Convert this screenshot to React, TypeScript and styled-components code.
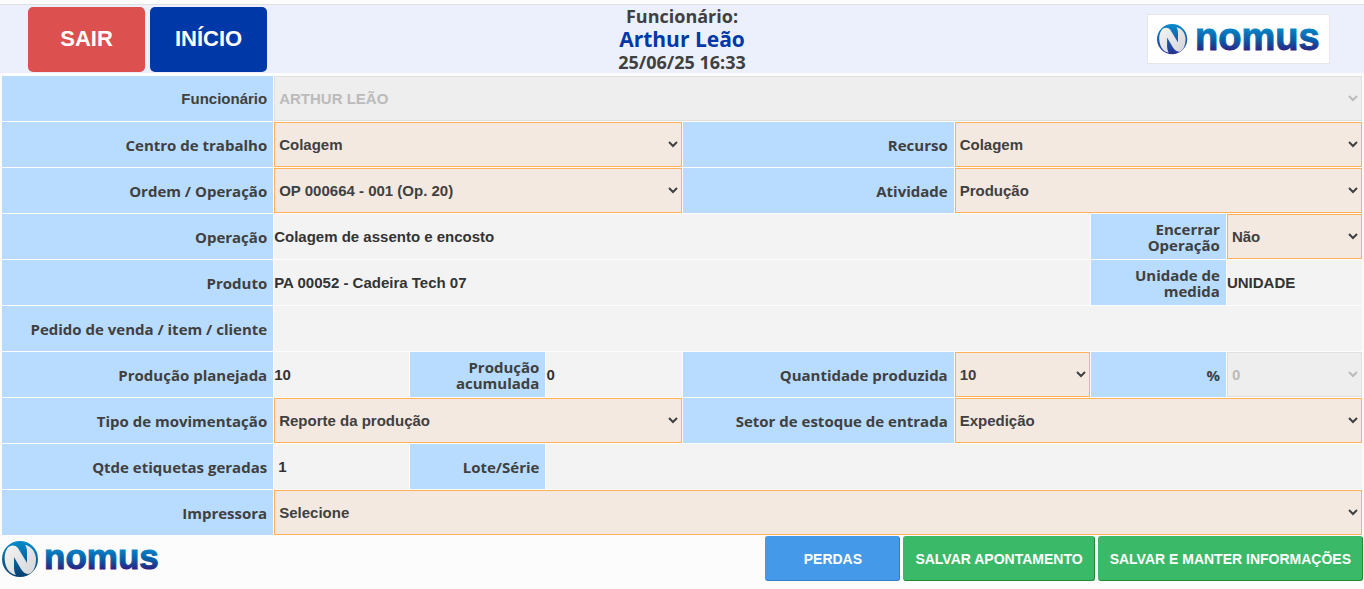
import React, { useId } from "react";
import styled, { createGlobalStyle } from "styled-components";

const sans = `"Liberation Sans", Arial, sans-serif`;
const openSans = `"Open Sans", "Noto Sans", sans-serif`;

const GlobalStyle = createGlobalStyle`
  *, *::before, *::after { box-sizing: border-box; }
  body {
    margin: 0;
    background: #fcfcfc;
    color: #404040;
    font: bold 15px/16px ${sans};
  }
`;

const Page = styled.div`
  padding-top: 4px;
`;

const Header = styled.header`
  display: grid;
  grid-template-columns: 1fr auto 1fr;
  align-items: center;
  min-height: 69px;
  padding: 0 28px;
  border-top: 1px solid #e0e0e0;
  background: #ebf0fc;
`;

const HeaderActions = styled.nav`
  display: flex;
  gap: 5px;
`;

const HeaderButton = styled.button<{ $color: string }>`
  width: 117px;
  height: 65px;
  padding: 0;
  border: 0;
  border-radius: 5px;
  background: ${(p) => p.$color};
  color: #fff;
  font: bold 22px/24px ${sans};
`;

const Session = styled.div`
  display: flex;
  flex-direction: column;
  align-items: center;
  font: bold 18px/22px ${openSans};
`;

const UserName = styled.strong`
  color: #0038a8;
  font-size: 21px;
  font-weight: bold;
  line-height: 24px;
`;

const LogoCard = styled.div`
  justify-self: end;
  display: flex;
  margin-right: 6px;
  padding: 8px;
  border: 1px solid #e6e6e6;
  background: #fff;
`;

const LogoSvg = styled.svg`
  display: block;
  overflow: visible;
`;

const Form = styled.form`
  padding-top: 3px;
`;

const Fields = styled.div`
  display: grid;
  grid-template-columns: repeat(10, minmax(0, 1fr));
  grid-auto-rows: minmax(45px, auto);
  gap: 1px;
  padding: 0 2px;
`;

const Label = styled.label<{ $span?: number; $plain?: boolean }>`
  grid-column: span ${(p) => p.$span ?? 2};
  display: flex;
  align-items: center;
  justify-content: flex-end;
  padding: 0 6px 0 24px;
  background: #b8dcff;
  font-family: ${(p) => (p.$plain ? sans : openSans)};
  text-align: right;
`;

const Value = styled.output<{ $span: number }>`
  grid-column: span ${(p) => p.$span};
  display: flex;
  align-items: center;
  background: #f3f3f3;
  color: #333;
`;

const TextInput = styled.input<{ $span: number }>`
  grid-column: span ${(p) => p.$span};
  width: 100%;
  min-width: 0;
  padding: 0 4px;
  border: 0;
  background: #f3f3f3;
  color: #333;
  font: inherit;
`;

const Select = styled.select<{ $span: number }>`
  grid-column: span ${(p) => p.$span};
  width: 100%;
  min-width: 0;
  height: 45px;
  padding: 0;
  border: 1px solid #ffb059;
  border-radius: 0;
  background: #f4e9e1;
  color: #404040;
  font: inherit;

  &:disabled {
    border-color: #e0e0e0;
    background: #eee;
    color: #bbb;
    opacity: 1;
  }
`;

const Footer = styled.footer`
  display: flex;
  align-items: center;
  justify-content: space-between;
  padding: 1px 1px 8px 2px;
`;

const FooterActions = styled.div`
  display: flex;
  gap: 3px;
`;

const FooterButton = styled.button<{ $primary?: boolean }>`
  min-width: 135px;
  height: 45px;
  padding: 0 11px;
  border: 1px solid;
  border-color: ${(p) =>
    p.$primary ? "#4499e8 #3280c4 #3280c4 #4499e8" : "#3aba68 #228b30 #228b30 #3aba68"};
  border-radius: 3px;
  background: ${(p) => (p.$primary ? "#4499e8" : "#3aba68")};
  color: #fff;
  font: bold 14px/16px ${sans};
`;

function Logo({ large = false }: { large?: boolean }) {
  const id = useId();
  const blue = `${id}-blue`;
  const silver = `${id}-silver`;
  return (
    <LogoSvg
      width={large ? 165 : 157}
      height={large ? 32 : 36}
      viewBox={large ? "0 0 165 32" : "0 0 157 36"}
      role="img"
      aria-label="nomus"
    >
      <defs>
        <linearGradient id={blue} x1="0" y1="0" x2="0" y2="1">
          <stop offset="0.3" stopColor="#0785c8" />
          <stop offset="0.6" stopColor="#0a58a4" />
          <stop offset="0.82" stopColor="#2b2385" />
        </linearGradient>
        <linearGradient id={`${blue}-disc`} x1="0" y1="0" x2="0" y2="1">
          <stop offset="0" stopColor="#078bcb" />
          <stop offset="1" stopColor={large ? "#28318f" : "#083f70"} />
        </linearGradient>
        <linearGradient id={silver} x1="0" y1="0" x2="1" y2="1">
          <stop offset="0" stopColor="#f4f4f4" />
          <stop offset="1" stopColor="#d4d5d8" />
        </linearGradient>
      </defs>
      <g transform={large ? "translate(1 1) scale(0.84)" : undefined}>
        <circle cx="18" cy="18" r="18" fill={`url(#${blue}-disc)`} />
        <path
          d="M5 8 C7 4 13 3 16 7 L25 22 V11 C25 7 24 5 23 4 C29 5 33 10 34 17 C34 25 32 31 27 33 C23 33 21 31 19 28 L12 16 V26 C12 30 13 33 14 34 C8 33 4 28 3 21 C2 16 3 11 5 8 Z"
          fill={`url(#${silver})`}
        />
      </g>
      <text
        x={large ? 39 : 42}
        y={large ? 27 : 28}
        fontFamily="Liberation Sans, Arial, sans-serif"
        fontWeight="700"
        fontSize={large ? 38 : 35}
        fill={`url(#${blue})`}
        stroke={`url(#${blue})`}
        strokeWidth="1"
      >
        nomus
      </text>
    </LogoSvg>
  );
}

type FieldProps = {
  id: string;
  label: string;
  value?: string;
  span: number;
  labelSpan?: number;
  plain?: boolean;
  disabled?: boolean;
};

function SelectField({ id, label, value, span, labelSpan, plain, disabled }: FieldProps) {
  return (
    <>
      <Label htmlFor={id} $span={labelSpan} $plain={plain}>{label}</Label>
      <Select id={id} $span={span} disabled={disabled} defaultValue={value}>
        <option>{value}</option>
      </Select>
    </>
  );
}

function ValueField({ id, label, value, span, labelSpan }: FieldProps) {
  return (
    <>
      <Label htmlFor={id} $span={labelSpan}>{label}</Label>
      <Value id={id} $span={span}>{value}</Value>
    </>
  );
}

function InputField({ id, label, value, span, labelSpan }: FieldProps) {
  return (
    <>
      <Label htmlFor={id} $span={labelSpan}>{label}</Label>
      <TextInput id={id} $span={span} defaultValue={value} />
    </>
  );
}

export default function App() {
  return (
    <Page>
      <GlobalStyle />
      <Header>
        <HeaderActions>
          <HeaderButton type="button" $color="#dc5050">SAIR</HeaderButton>
          <HeaderButton type="button" $color="#0038a8">INÍCIO</HeaderButton>
        </HeaderActions>
        <Session>
          <span>Funcionário:</span>
          <UserName>Arthur Leão</UserName>
          <time dateTime="2025-06-25T16:33">25/06/25 16:33</time>
        </Session>
        <LogoCard>
          <Logo large />
        </LogoCard>
      </Header>
      <Form onSubmit={(event) => event.preventDefault()}>
        <Fields>
          <SelectField id="funcionario" label="Funcionário" value="ARTHUR LEÃO" span={8} plain disabled />
          <SelectField id="centro" label="Centro de trabalho" value="Colagem" span={3} />
          <SelectField id="recurso" label="Recurso" value="Colagem" span={3} />
          <SelectField id="ordem" label="Ordem / Operação" value="OP 000664 - 001 (Op. 20)" span={3} />
          <SelectField id="atividade" label="Atividade" value="Produção" span={3} />
          <ValueField id="operacao" label="Operação" value="Colagem de assento e encosto" span={6} />
          <SelectField id="encerrar" label="Encerrar Operação" value="Não" labelSpan={1} span={1} />
          <ValueField id="produto" label="Produto" value="PA 00052 - Cadeira Tech 07" span={6} />
          <ValueField id="unidade" label="Unidade de medida" value="UNIDADE" labelSpan={1} span={1} />
          <ValueField id="pedido" label="Pedido de venda / item / cliente" span={8} />
          <ValueField id="planejada" label="Produção planejada" value="10" span={1} />
          <ValueField id="acumulada" label="Produção acumulada" value="0" labelSpan={1} span={1} />
          <SelectField id="quantidade" label="Quantidade produzida" value="10" span={1} />
          <SelectField id="percentual" label="%" value="0" labelSpan={1} span={1} disabled />
          <SelectField id="tipo" label="Tipo de movimentação" value="Reporte da produção" span={3} />
          <SelectField id="setor" label="Setor de estoque de entrada" value="Expedição" span={3} />
          <InputField id="etiquetas" label="Qtde etiquetas geradas" value="1" span={1} />
          <InputField id="lote" label="Lote/Série" labelSpan={1} span={6} />
          <SelectField id="impressora" label="Impressora" value="Selecione" span={8} />
        </Fields>
        <Footer>
          <Logo />
          <FooterActions>
            <FooterButton type="button" $primary>PERDAS</FooterButton>
            <FooterButton type="submit">SALVAR APONTAMENTO</FooterButton>
            <FooterButton type="submit">SALVAR E MANTER INFORMAÇÕES</FooterButton>
          </FooterActions>
        </Footer>
      </Form>
    </Page>
  );
}
